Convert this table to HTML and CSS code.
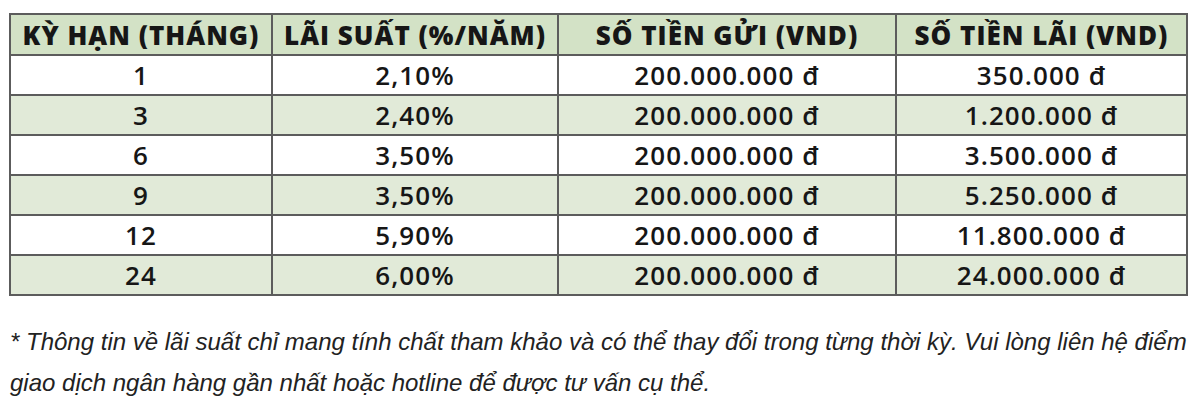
FILE: index.html
```html
<!DOCTYPE html>
<html lang="vi">
<head>
<meta charset="utf-8">
<link rel="stylesheet" href="styles.css">
</head>
<body>
<div class="page">
<table class="rates">
<colgroup>
<col class="c1"><col class="c2"><col class="c3"><col class="c4">
</colgroup>
<thead>
<tr><th>KỲ HẠN (THÁNG)</th><th>LÃI SUẤT (%/NĂM)</th><th>SỐ TIỀN GỬI (VND)</th><th>SỐ TIỀN LÃI (VND)</th></tr>
</thead>
<tbody>
<tr><td>1</td><td>2,10%</td><td>200.000.000 đ</td><td>350.000 đ</td></tr>
<tr class="alt"><td>3</td><td>2,40%</td><td>200.000.000 đ</td><td>1.200.000 đ</td></tr>
<tr><td>6</td><td>3,50%</td><td>200.000.000 đ</td><td>3.500.000 đ</td></tr>
<tr class="alt"><td>9</td><td>3,50%</td><td>200.000.000 đ</td><td>5.250.000 đ</td></tr>
<tr><td>12</td><td>5,90%</td><td>200.000.000 đ</td><td>11.800.000 đ</td></tr>
<tr class="alt"><td>24</td><td>6,00%</td><td>200.000.000 đ</td><td>24.000.000 đ</td></tr>
</tbody>
</table>
<p class="note">* Thông tin về lãi suất chỉ mang tính chất tham khảo và có thể thay đổi trong từng thời kỳ. Vui lòng liên hệ điểm giao dịch ngân hàng gần nhất hoặc hotline để được tư vấn cụ thể.</p>
</div>
</body>
</html>
```
FILE: styles.css
```css
html, body {
  margin: 0;
  padding: 0;
  background: #ffffff;
}
.page {
  padding: 13px 14px 0 9px;
}
.rates {
  width: 1177px;
  border-collapse: collapse;
  table-layout: fixed;
  font-family: "Open Sans", "DejaVu Sans", sans-serif;
  color: #161616;
  border: 2px solid #666;
}
.c1 { width: 262px; }
.c2 { width: 286px; }
.c3 { width: 338px; }
.c4 { width: 291px; }
.rates th, .rates td {
  border: 2px solid #5c5c5c;
  text-align: center;
  padding: 0;
  white-space: nowrap;
  line-height: 36px;
}
.rates th {
  height: 39px;
  background: #d3e2c6;
  font-size: 26px;
  font-weight: 800;
  letter-spacing: 1px;
}
.rates td {
  height: 38px;
  background: #ffffff;
  font-size: 26px;
  font-weight: 600;
  letter-spacing: 1.1px;
}
.rates tr.alt td {
  background: #e1ead8;
}
.note {
  margin: 25px -12px 0 1px;
  font-family: "Liberation Sans", Arial, sans-serif;
  font-style: italic;
  font-size: 24px;
  line-height: 41px;
  color: #222;
}
```
